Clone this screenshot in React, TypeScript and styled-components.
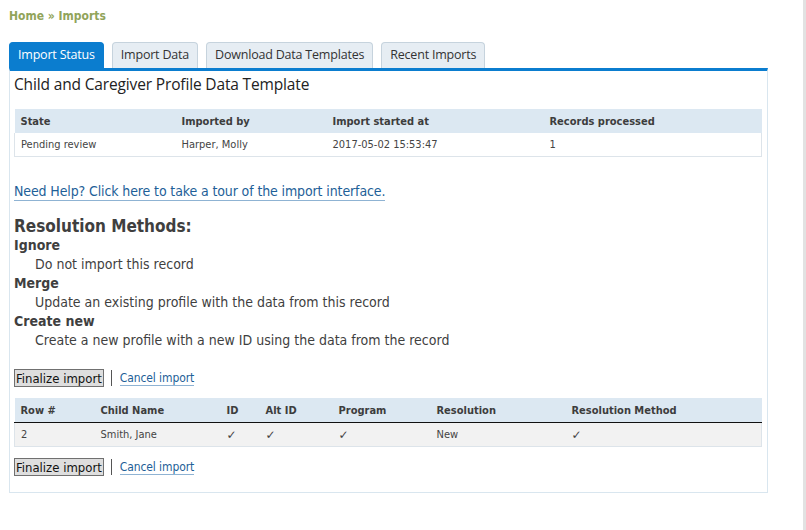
import styled, { createGlobalStyle } from 'styled-components';

const GlobalStyle = createGlobalStyle`
  html, body {
    margin: 0;
    padding: 0;
    background: #ffffff;
  }
  body {
    font-family: "DejaVu Sans Condensed", "Liberation Sans", sans-serif;
    color: #333333;
  }
`;

// === LAYOUT ===

const Page = styled.div`
  width: 806px;
  height: 530px;
  box-sizing: border-box;
  padding: 8px 0 0 9px;
  overflow: hidden;
  border-right: 3px solid #e2e2e2;
`;

const Breadcrumb = styled.div`
  font-size: 12px;
  font-weight: bold;
  color: #91a45a;
  height: 16px;
  line-height: 16px;
`;

const Tabs = styled.div`
  display: flex;
  gap: 8px;
  margin-top: 18px;
  height: 26px;
  align-items: flex-end;
`;

const Tab = styled.div<{ $active?: boolean }>`
  height: 26px;
  box-sizing: border-box;
  padding: 0 8px 2px 8px;
  display: flex;
  align-items: center;
  font-family: "Open Sans", "Liberation Sans", sans-serif;
  font-size: 12.5px;
  letter-spacing: -0.2px;
  border-radius: 4px 4px 0 0;
  color: ${({ $active }) => ($active ? '#ffffff' : '#333333')};
  background: ${({ $active }) => ($active ? '#0b7dcf' : '#e6edf3')};
  border: 1px solid ${({ $active }) => ($active ? '#0b7dcf' : '#c6d3dd')};
  border-bottom: none;
`;

const Panel = styled.div`
  width: 759px;
  height: 425px;
  box-sizing: border-box;
  border: 1px solid #d9e6ef;
  border-top: 3px solid #0b7dcf;
  padding: 1px 5px 0 4px;
`;

const Title = styled.h2`
  margin: 0;
  font-family: "Open Sans", "Liberation Sans", sans-serif;
  font-weight: normal;
  font-size: 15.5px;
  letter-spacing: -0.15px;
  color: #222222;
  height: 24px;
  line-height: 24px;
`;

// === TABLES ===

const Table = styled.table<{ $ruled?: boolean; $stripe?: string }>`
  width: 748px;
  border-collapse: collapse;
  font-size: 11px;
  margin-top: ${({ $ruled }) => ($ruled ? '11px' : '13px')};

  th {
    background: #dce8f2;
    text-align: left;
    font-weight: bold;
    color: #3d3d3d;
    height: 24px;
    padding: 0 0 0 6px;
    border-bottom: ${({ $ruled }) => ($ruled ? '1px solid #111111' : 'none')};
  }

  td {
    height: 23px;
    padding: 0 0 0 6px;
    color: #444444;
    background: ${({ $stripe }) => $stripe || '#ffffff'};
    border-bottom: 1px solid #dde4ea;
  }

  td:first-child {
    border-left: 1px solid #dde4ea;
  }

  td:last-child {
    border-right: 1px solid #dde4ea;
  }
`;

const Check = styled.span`
  font-family: "DejaVu Sans", sans-serif;
  font-size: 12px;
  color: #444444;
`;

// === HELP / METHODS ===

const HelpLink = styled.a`
  display: inline-block;
  margin-top: 26px;
  font-size: 14px;
  letter-spacing: -0.12px;
  color: #1e5f98;
  text-decoration: none;
  border-bottom: 1px solid #8fb3d3;
  line-height: 17px;
`;

const Methods = styled.div`
  margin-top: 15px;
  color: #3f3f3f;
`;

const MethodsHeading = styled.h3`
  margin: 0;
  font-size: 17px;
  font-weight: bold;
  line-height: 20px;
`;

const Term = styled.div`
  font-size: 14px;
  font-weight: bold;
  line-height: 19px;
`;

const Definition = styled.div`
  font-size: 14px;
  line-height: 19px;
  padding-left: 21px;
`;

// === ACTIONS ===

const Actions = styled.div<{ $top: number }>`
  display: flex;
  align-items: center;
  margin-top: ${({ $top }) => $top}px;
  height: 18px;
`;

const FinalizeButton = styled.button`
  font-family: "DejaVu Sans Condensed", "Liberation Sans", sans-serif;
  font-size: 13px;
  color: #111111;
  background: #dedede;
  border: 1px solid #707070;
  padding: 0 1px;
  height: 18px;
  line-height: 15px;
  cursor: pointer;
`;

const Separator = styled.span`
  width: 1px;
  height: 16px;
  background: #555555;
  margin: 0 8px 0 7px;
`;

const CancelLink = styled.a`
  font-size: 12px;
  letter-spacing: -0.1px;
  color: #1e5f98;
  text-decoration: none;
  border-bottom: 1px solid #8fb3d3;
  line-height: 14px;
`;

// === DATA ===

const methods = [
  { term: 'Ignore', text: 'Do not import this record' },
  { term: 'Merge', text: 'Update an existing profile with the data from this record' },
  { term: 'Create new', text: 'Create a new profile with a new ID using the data from the record' },
];

function ActionRow({ top }: { top: number }) {
  return (
    <Actions $top={top}>
      <FinalizeButton>Finalize import</FinalizeButton>
      <Separator />
      <CancelLink href="#">Cancel import</CancelLink>
    </Actions>
  );
}

export default function App() {
  return (
    <>
      <GlobalStyle />
      <Page>
        <Breadcrumb>Home » Imports</Breadcrumb>
        <Tabs>
          <Tab $active>Import Status</Tab>
          <Tab>Import Data</Tab>
          <Tab>Download Data Templates</Tab>
          <Tab>Recent Imports</Tab>
        </Tabs>
        <Panel>
          <Title>Child and Caregiver Profile Data Template</Title>

          <Table>
            <colgroup>
              <col style={{ width: 161 }} />
              <col style={{ width: 151 }} />
              <col style={{ width: 217 }} />
              <col />
            </colgroup>
            <thead>
              <tr>
                <th>State</th>
                <th>Imported by</th>
                <th>Import started at</th>
                <th>Records processed</th>
              </tr>
            </thead>
            <tbody>
              <tr>
                <td>Pending review</td>
                <td>Harper, Molly</td>
                <td>2017-05-02 15:53:47</td>
                <td>1</td>
              </tr>
            </tbody>
          </Table>

          <HelpLink href="#">Need Help? Click here to take a tour of the import interface.</HelpLink>

          <Methods>
            <MethodsHeading>Resolution Methods:</MethodsHeading>
            {methods.map((m) => (
              <div key={m.term}>
                <Term>{m.term}</Term>
                <Definition>{m.text}</Definition>
              </div>
            ))}
          </Methods>

          <ActionRow top={19} />

          <Table $ruled $stripe="#f2f2f2">
            <colgroup>
              <col style={{ width: 80 }} />
              <col style={{ width: 126 }} />
              <col style={{ width: 39 }} />
              <col style={{ width: 73 }} />
              <col style={{ width: 98 }} />
              <col style={{ width: 135 }} />
              <col />
            </colgroup>
            <thead>
              <tr>
                <th>Row #</th>
                <th>Child Name</th>
                <th>ID</th>
                <th>Alt ID</th>
                <th>Program</th>
                <th>Resolution</th>
                <th>Resolution Method</th>
              </tr>
            </thead>
            <tbody>
              <tr>
                <td>2</td>
                <td>Smith, Jane</td>
                <td><Check>✓</Check></td>
                <td><Check>✓</Check></td>
                <td><Check>✓</Check></td>
                <td>New</td>
                <td><Check>✓</Check></td>
              </tr>
            </tbody>
          </Table>

          <ActionRow top={11} />
        </Panel>
      </Page>
    </>
  );
}
